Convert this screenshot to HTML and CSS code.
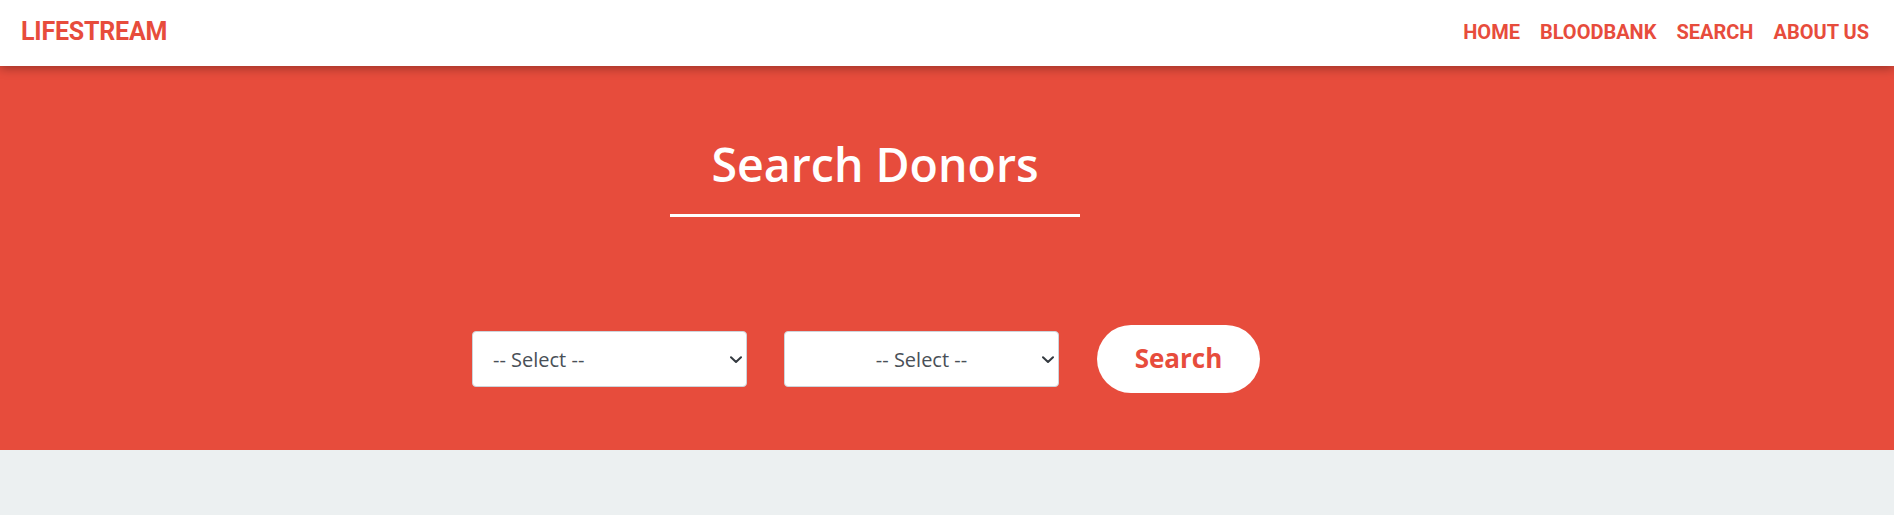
FILE: index.html
```html
<!DOCTYPE html>
<html lang="en">
<head>
<meta charset="utf-8">
<title>LifeStream - Search Donors</title>
<link rel="stylesheet" href="styles.css">
</head>
<body>
<header class="navbar">
  <a class="brand" href="#">LIFESTREAM</a>
  <nav class="nav-links">
    <a href="#">HOME</a>
    <a href="#">BLOODBANK</a>
    <a href="#">SEARCH</a>
    <a href="#">ABOUT US</a>
  </nav>
</header>
<section class="hero">
  <div class="title-block">
    <h1 class="title">Search Donors</h1>
    <div class="title-rule"></div>
  </div>
  <form class="search-form">
    <div class="select-wrap">
      <select class="select select-left"><option>-- Select --</option></select>
      <svg class="chevron" width="12" height="8" viewBox="0 0 12 8"><path d="M1 1.2 L6 6 L11 1.2" fill="none" stroke="#343a40" stroke-width="2" stroke-linecap="round" stroke-linejoin="round"/></svg>
    </div>
    <div class="select-wrap">
      <select class="select select-center"><option>-- Select --</option></select>
      <svg class="chevron" width="12" height="8" viewBox="0 0 12 8"><path d="M1 1.2 L6 6 L11 1.2" fill="none" stroke="#343a40" stroke-width="2" stroke-linecap="round" stroke-linejoin="round"/></svg>
    </div>
    <button type="button" class="search-btn">Search</button>
  </form>
</section>
<main class="content"></main>
</body>
</html>
```
FILE: styles.css
```css
* { box-sizing: border-box; }
html, body { margin: 0; padding: 0; }
body {
  background: #ecf0f1;
  font-family: "Open Sans", "Noto Sans", sans-serif;
}
.navbar {
  position: relative;
  z-index: 2;
  height: 66px;
  background: #fff;
  display: flex;
  align-items: center;
  justify-content: space-between;
  padding: 0 25px 4px 21px;
  box-shadow: 0 2px 10px rgba(0, 0, 0, 0.35);
  font-family: Roboto, "Liberation Sans", sans-serif;
}
.brand {
  color: #e74c3c;
  font-weight: 700;
  font-size: 25px;
  text-decoration: none;
  letter-spacing: -0.2px;
}
.nav-links {
  display: flex;
  gap: 20px;
  padding-top: 2px;
}
.nav-links a {
  color: #e74c3c;
  font-weight: 700;
  font-size: 20px;
  text-decoration: none;
}
.hero {
  background: #e74c3c;
  padding: 69px 0 57px;
  display: flex;
  flex-direction: column;
  align-items: center;
}
.title-block {
  width: 410px;
  margin-right: 144px;
  display: flex;
  flex-direction: column;
  align-items: center;
}
.title {
  margin: 0;
  color: #fff;
  font-size: 46.5px;
  font-weight: 600;
  line-height: 58px;
}
.title-rule {
  width: 410px;
  height: 3px;
  background: #fff;
  margin-top: 21px;
}
.search-form {
  margin-top: 108px;
  margin-right: 162px;
  display: flex;
  align-items: center;
  height: 68px;
}
.select-wrap {
  position: relative;
  width: 275px;
  height: 56px;
  margin-right: 37px;
}
.select {
  appearance: none;
  -webkit-appearance: none;
  width: 100%;
  height: 100%;
  background: #fff;
  border: 1px solid #ced4da;
  border-radius: 4px;
  font-family: "Open Sans", "Noto Sans", sans-serif;
  font-size: 20px;
  color: #495057;
  padding: 0 28px 0 20px;
}
.select-center { text-align: center; text-align-last: center; padding-left: 28px; }
.chevron {
  position: absolute;
  right: 5px;
  top: 25px;
  pointer-events: none;
}
.search-btn {
  margin-left: 1px;
  width: 163px;
  height: 68px;
  border: none;
  border-radius: 34px;
  background: #fff;
  color: #e74c3c;
  font-family: "Open Sans", "Noto Sans", sans-serif;
  font-weight: 700;
  font-size: 26px;
  padding: 0 0 2px;
}
.content { height: 65px; }
```
